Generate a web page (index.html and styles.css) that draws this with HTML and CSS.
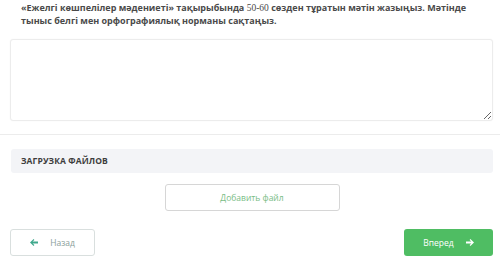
FILE: index.html
```html
<!DOCTYPE html>
<html lang="ru">
<head>
  <meta charset="UTF-8" />
  <title>Задание</title>
  <link rel="stylesheet" href="styles.css">
</head>
<body>
  <div class="task">
    <p class="question">«Ежелгі көшпелілер мәдениеті» тақырыбында <span class="num">50-60</span> сөзден тұратын мәтін жазыңыз. Мәтінде тыныс белгі мен орфографиялық норманы сақтаңыз.</p>
    <textarea class="answer"></textarea>
  </div>

  <div class="uploads">
    <div class="uploads-title">Загрузка файлов</div>
    <div class="uploads-action">
      <button type="button" class="add-file">Добавить файл</button>
    </div>
  </div>

  <div class="nav">
    <button type="button" class="btn-back">
      <svg class="arrow" viewBox="0 0 8 7" width="8" height="7"><path d="M0 3.5 L3.6 0 L4.4 0.9 L2.6 2.6 H8 V4.4 H2.6 L4.4 6.1 L3.6 7 Z" /></svg>
      Назад
    </button>
    <button type="button" class="btn-next">
      Вперед
      <svg class="arrow" viewBox="0 0 8 7" width="8" height="7"><path d="M8 3.5 L4.4 0 L3.6 0.9 L5.4 2.6 H0 V4.4 H5.4 L3.6 6.1 L4.4 7 Z" /></svg>
    </button>
  </div>
</body>
</html>
```

FILE: styles.css
```css
body { margin: 0; background: #fff; font-family: "Open Sans", "Noto Sans", sans-serif; color: #4a4a4a; }
.task { padding: 0 7px 13px 10px; border-bottom: 1px solid #ececec; }
.question { margin: 0 0 12px 11px; font-size: 9px; font-weight: 700; line-height: 13px; padding-top: 1px; }
.question .num { font-family: "Liberation Serif", serif; font-weight: 400; font-size: 9.5px; line-height: 1; }
.answer {
  display: block; box-sizing: border-box; width: 483px; height: 82px; margin: 0;
  border: 1px solid #ececec; border-radius: 3px; box-shadow: 0 0 2px rgb(0 0 0 / 0.04); resize: vertical;
}
.uploads { padding: 14px 7px 0 11px; }
.uploads-title {
  background: #f3f4f7; border-radius: 3px; height: 24px; line-height: 24px; padding-left: 10px;
  font-size: 8.5px; font-weight: 700; text-transform: uppercase; color: #3d3d3d; letter-spacing: 0.1px;
}
.uploads-action { display: flex; justify-content: center; padding-top: 11px; }
.add-file {
  width: 175px; height: 27px; background: #fff; border: 1px solid #d6d6d6; border-radius: 3px;
  font-family: "Open Sans", sans-serif; font-size: 8.5px; color: #79bd86; cursor: pointer;
}
.nav { display: flex; justify-content: space-between; padding: 18px 7px 0 10px; }
.nav button {
  display: flex; align-items: center; justify-content: center; gap: 12px; height: 27px; border-radius: 3px;
  font-family: "Open Sans", sans-serif; font-size: 8.5px; cursor: pointer;
}
.btn-back { width: 85px; background: #fff; border: 1px solid #d9dfde; color: #8a9e9a; }
.btn-back .arrow { fill: #3fa88c; }
.btn-next { width: 89px; background: #4fbd63; border: none; color: #fff; }
.btn-next .arrow { fill: #fff; }
```
